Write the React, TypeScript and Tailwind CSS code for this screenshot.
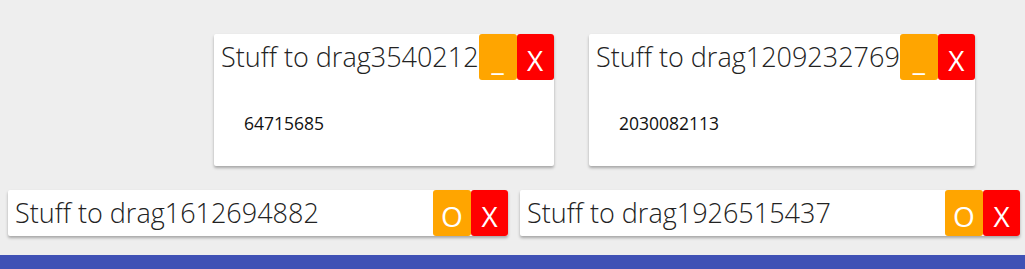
import React from "react";

interface Win {
  id: number;
  body: string;
  left: string;
}

const OPEN_WINDOWS: Win[] = [
  { id: 3540212, body: "64715685", left: "left-[214px]" },
  { id: 1209232769, body: "2030082113", left: "left-[589px]" },
];

const MINIMIZED = [1612694882, 1926515437];

const font = { fontFamily: "'Open Sans', 'Noto Sans', sans-serif" };

function HeaderButtons({ minimized }: { minimized?: boolean }) {
  return (
    <div className="flex shrink-0">
      <button className="w-[38px] h-[46px] pt-[6px] bg-[#ffa500] text-white text-[28px] leading-[40px] rounded-[3px]">
        {minimized ? "O" : "_"}
      </button>
      <button className="w-[37px] h-[46px] pt-[6px] bg-[#ff0000] text-white text-[28px] leading-[40px] rounded-[3px]">
        X
      </button>
    </div>
  );
}

function DragWindow({ win }: { win: Win }) {
  return (
    <div
      className={`absolute top-[34px] ${win.left} bg-white rounded-[2px] shadow-[0_2px_3px_rgba(0,0,0,0.3)]`}
    >
      <div className="flex items-start">
        <span className="pl-[7px] text-[27px] leading-[46px] font-light text-[#222] whitespace-nowrap">
          Stuff to drag{win.id}
        </span>
        <HeaderButtons />
      </div>
      <div className="p-[30px] text-[17.5px] leading-[26px] text-[#111]">{win.body}</div>
    </div>
  );
}

export default function App() {
  return (
    <div className="h-[269px] flex flex-col bg-[#eeeeee] overflow-hidden" style={font}>
      <div className="relative h-[190px] shrink-0">
        {OPEN_WINDOWS.map((w) => (
          <DragWindow key={w.id} win={w} />
        ))}
      </div>

      <div className="flex gap-[12px] pl-[8px] h-[46px] shrink-0">
        {MINIMIZED.map((id) => (
          <div
            key={id}
            className="w-[500px] flex items-start bg-white rounded-[2px] shadow-[0_2px_3px_rgba(0,0,0,0.3)]"
          >
            <span className="flex-1 pl-[7px] text-[27px] leading-[46px] font-light text-[#222] whitespace-nowrap">
              Stuff to drag{id}
            </span>
            <HeaderButtons minimized />
          </div>
        ))}
      </div>

      <div className="h-[19px] shrink-0" />
      <div className="flex-1 bg-[#3f51b5]" />
    </div>
  );
}
